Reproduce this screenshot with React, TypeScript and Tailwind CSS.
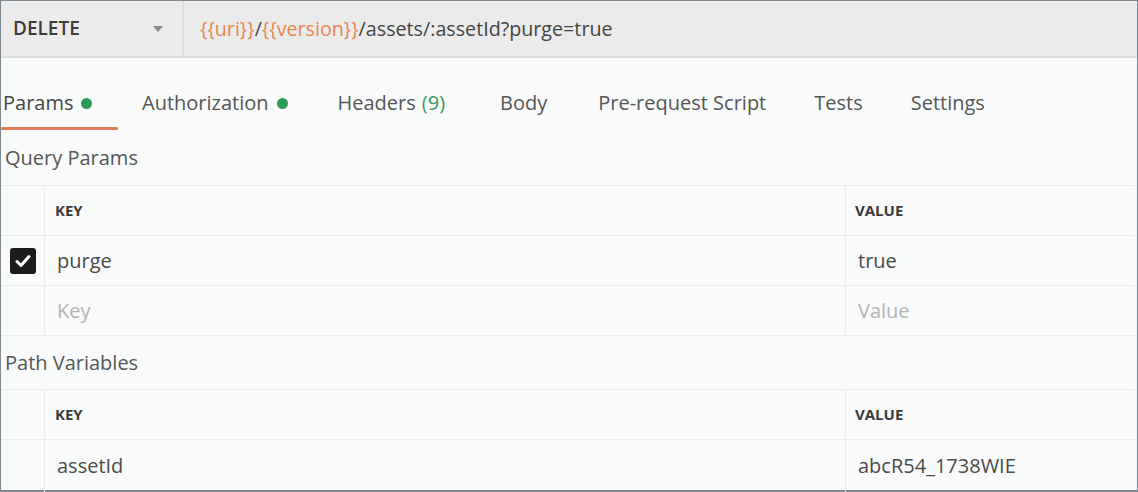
import React from 'react';

const font = { fontFamily: '"Open Sans", "Liberation Sans", sans-serif' };

function Dot() {
  return <span className="ml-[8px] inline-block h-[11px] w-[11px] rounded-full bg-[#2f9a55]" />;
}

function CheckBox() {
  return (
    <span className="flex h-[26px] w-[26px] items-center justify-center rounded-[3px] bg-[#1c1c1c]">
      <svg width="16" height="14" viewBox="0 0 16 14" fill="none">
        <path d="M2 7.5 L6 11.5 L14 2.5" stroke="#ffffff" strokeWidth="3" strokeLinecap="round" strokeLinejoin="round" />
      </svg>
    </span>
  );
}

interface Row {
  key: string;
  value: string;
  checked?: boolean;
  placeholder?: boolean;
}

function ParamTable({ rows, lastHeight }: { rows: Row[]; lastHeight?: string }) {
  return (
    <div className="mr-[3px] border-t border-[#e8ebeb]">
      <div className="flex h-[50px] border-b border-[#e8ebeb]">
        <div className="w-[44px] shrink-0 border-r border-[#e8ebeb]" />
        <div className="flex flex-1 items-center border-r border-[#e8ebeb] pl-[10px] text-[15px] font-bold text-[#3a3a3a]">KEY</div>
        <div className="flex w-[288px] shrink-0 items-center pl-[9px] text-[15px] font-bold text-[#3a3a3a]">VALUE</div>
      </div>
      {rows.map((r, i) => (
        <div
          key={i}
          className={`flex ${i === rows.length - 1 && lastHeight ? lastHeight : 'h-[50px] border-b border-[#e8ebeb]'}`}
        >
          <div className="flex w-[44px] shrink-0 items-center justify-center border-r border-[#e8ebeb]">
            {r.checked && <CheckBox />}
          </div>
          <div
            className={`flex flex-1 items-center border-r border-[#e8ebeb] pl-[12px] text-[20px] ${r.placeholder ? 'text-[#b4b4b4]' : 'text-[#4a4a4a]'}`}
          >
            {r.key}
          </div>
          <div
            className={`flex w-[288px] shrink-0 items-center pl-[12px] text-[20px] ${r.placeholder ? 'text-[#b4b4b4]' : 'text-[#4a4a4a]'}`}
          >
            {r.value}
          </div>
        </div>
      ))}
    </div>
  );
}

export default function App() {
  const tabs = ['Body', 'Pre-request Script', 'Tests', 'Settings'];

  return (
    <div style={font} className="h-[492px] w-[1138px] overflow-hidden bg-white">
      <div className="flex h-[492px] flex-col border border-b-2 border-[#7d8791] bg-[#f9fbfb]">
        {/* request line */}
        <div className="flex h-[57px] shrink-0 border-b-2 border-[#dcdcdc] bg-[#ebebeb]">
          <div className="flex w-[183px] shrink-0 items-center justify-between border-r-2 border-[#dedede] pl-[12px] pr-[19px]">
            <span className="text-[19px] font-semibold text-[#3c3c3c]">DELETE</span>
            <svg width="10" height="6" viewBox="0 0 10 6">
              <path d="M0 0 L10 0 L5 6 Z" fill="#8a8a8a" />
            </svg>
          </div>
          <div className="flex items-center pl-[16px] text-[19.7px] text-[#444]">
            <span className="text-[#e8864f]">{'{{uri}}'}</span>
            <span>/</span>
            <span className="text-[#e8864f]">{'{{version}}'}</span>
            <span>/assets/:assetId?purge=true</span>
          </div>
        </div>

        {/* tabs */}
        <div className="mt-[22px] flex h-[50px] shrink-0 items-stretch pb-[4px] text-[20px] text-[#555]">
          <div className="relative flex w-[117px] items-center pl-[2px]">
            <span className="text-[#444]">Params</span>
            <Dot />
            <span className="absolute -bottom-[4px] left-0 h-[3px] w-[117px] rounded-full bg-[#e07b56]" />
          </div>
          <div className="ml-[24px] flex items-center">
            <span>Authorization</span>
            <Dot />
          </div>
          <div className="ml-[50px] flex items-center">
            Headers <span className="ml-[6px] text-[#3a9a5c]">(9)</span>
          </div>
          {tabs.map((t, i) => (
            <div key={t} className={`flex items-center ${i === 0 ? 'ml-[55px]' : i === 1 ? 'ml-[51px]' : 'ml-[48px]'}`}>
              {t}
            </div>
          ))}
        </div>

        <div className="flex h-[55px] shrink-0 items-center pl-[4px] text-[20px] text-[#555]">Query Params</div>
        <ParamTable
          rows={[
            { key: 'purge', value: 'true', checked: true },
            { key: 'Key', value: 'Value', placeholder: true },
          ]}
        />

        <div className="flex h-[53px] shrink-0 items-center pl-[4px] text-[20px] text-[#555]">Path Variables</div>
        <ParamTable rows={[{ key: 'assetId', value: 'abcR54_1738WIE' }]} lastHeight="flex-1 h-[52px]" />
      </div>
    </div>
  );
}
